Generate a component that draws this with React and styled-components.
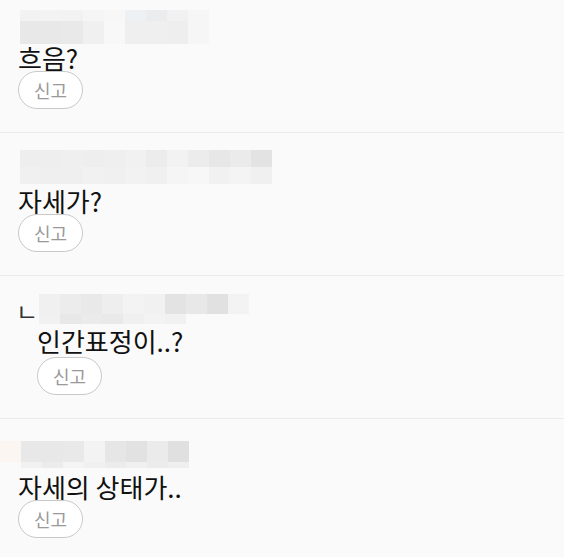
import styled, { createGlobalStyle } from "styled-components"

const GlobalStyle = createGlobalStyle`
  body {
    margin: 0;
    background: #fafafa;
    font-family: "Noto Sans CJK KR", "Noto Sans", sans-serif;
  }
`;

const comments = [
  {
    text: "흐음?",
    top: 17,
    gap: 0,
    name: [
      { h: 11, cells: ["#f2f2f2", "#f3f3f3", "#f2f2f2", "#f5f5f5", "#f7f7f7", "#eef1f4", "#ebecee", "#f1f1f2", "#f6f6f6"] },
      { h: 23, cells: ["#e8e8e8", "#e8e8e8", "#e9e9e9", "#f0f0f0", "#f8f8f8", "#efeff0", "#efeff0", "#eeeeef", "#f6f6f6"] },
    ],
  },
  {
    text: "자세가?",
    top: 17,
    gap: 3,
    name: [
      { h: 17, cells: ["#eeeeee", "#eeeeee", "#efefef", "#eeeeee", "#efefef", "#f1f1f1", "#ececec", "#f2f2f2", "#ececec", "#e7e7e8", "#ebebeb", "#e3e3e3"] },
      { h: 17, cells: ["#f0f0f0", "#efefef", "#efefef", "#f1f1f1", "#f0f0f0", "#f2f2f2", "#f0f0f0", "#f5f5f5", "#f7f7f7", "#f1f1f1", "#f4f4f4", "#f0f0f0"] },
    ],
  },
  {
    text: "인간표정이..?",
    reply: true,
    top: 18,
    gap: 3,
    name: [
      { h: 20, cells: ["#f0f0f0", "#ececec", "#e9e9e9", "#eeeeee", "#f3f3f3", "#f1f1f1", "#e3e3e3", "#e8e8e8", "#e1e1e1", "#f3f3f3"] },
      { h: 10, cells: ["#f1f1f1", "#e8e8e8", "#ebebeb", "#e9e9e9", "#f0f0f0", "#f3f3f3", "#f1f1f1"] },
    ],
  },
  {
    text: "자세의 상태가..",
    top: 22,
    gap: 5,
    shift: -21,
    name: [
      { h: 21, cells: ["#fbf6f2", "#e8e8e8", "#e8e8e8", "#e9e9e9", "#f3f3f3", "#e6e6e6", "#e2e2e2", "#ebebeb", "#e0e0e0"] },
      { h: 6, cells: ["#fafafa", "#f1f1f1", "#ececec", "#f4f4f4", "#f0f0f0", "#ececec", "#f0f0f0", "#ececec", "#efefef"] },
    ],
  },
];

function Mosaic({ rows, top, gap, shift }) {
  return (
    <NameBlock $top={top} $gap={gap} $shift={shift}>
      {rows.map((row, i) => (
        <MosaicRow key={i}>
          {row.cells.map((c, j) => (
            <Cell key={j} $c={c} $h={row.h} />
          ))}
        </MosaicRow>
      ))}
    </NameBlock>
  );
}

function Comment({ item }) {
  return (
    <Item>
      {item.reply && <Marker>ㄴ</Marker>}
      <Body>
        <Mosaic rows={item.name} top={item.top} gap={item.gap} shift={item.shift} />
        <Text>{item.text}</Text>
        <ReportButton $reply={item.reply}>신고</ReportButton>
      </Body>
    </Item>
  );
}

export default function App() {
  return (
    <>
      <GlobalStyle />
      <List>
        {comments.map((c, i) => (
          <Comment key={i} item={c} />
        ))}
      </List>
    </>
  );
}

const List = styled.div`
  margin-top: -7px;
`;

const Item = styled.div`
  display: flex;
  padding: 0 0 23px 18px;
  border-bottom: 1px solid #ebebeb;
  &:last-child {
    border-bottom: none;
  }
`;

const Marker = styled.span`
  width: 19px;
  flex-shrink: 0;
  margin-top: 22px;
  margin-left: -2px;
  margin-right: 2px;
  font-size: 24px;
  line-height: 26px;
  color: #333;
`;

const Body = styled.div`
  display: flex;
  flex-direction: column;
  align-items: flex-start;
`;

const NameBlock = styled.div`
  margin-top: ${(p) => p.$top}px;
  margin-bottom: ${(p) => p.$gap}px;
  margin-left: ${(p) => (p.$shift ? p.$shift + 3 : 2)}px;
  display: flex;
  flex-direction: column;
`;

const MosaicRow = styled.div`
  display: flex;
`;

const Cell = styled.div`
  width: 21px;
  height: ${(p) => p.$h}px;
  background: ${(p) => p.$c};
`;

const Text = styled.div`
  font-size: 26px;
  line-height: 28px;
  color: #111;
  white-space: nowrap;
`;

const ReportButton = styled.button`
  margin-top: ${(p) => (p.$reply ? 2 : -1)}px;
  width: 65px;
  height: 38px;
  padding: 0;
  border: 1px solid #c9c9c9;
  border-radius: 19px;
  background: #fff;
  color: #999;
  font-family: inherit;
  font-size: 18px;
  line-height: 1;
`;
